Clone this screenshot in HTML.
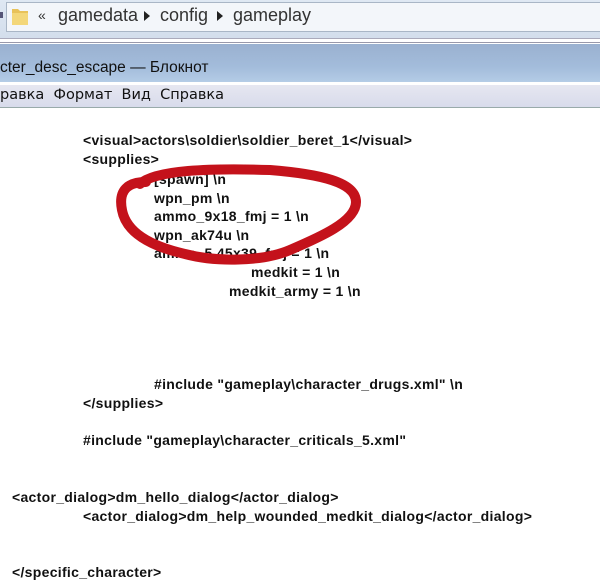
<!DOCTYPE html>
<html><head><meta charset="utf-8"><style>
body{margin:0;width:600px;height:582px;overflow:hidden;background:#fff;position:relative;font-family:"Liberation Sans",sans-serif}
.a{position:absolute}
.t{position:absolute;font-size:14px;letter-spacing:0.3px;font-weight:bold;color:#111;white-space:pre;line-height:16px}
</style></head><body>
<div class="a" style="left:0;top:0;width:600px;height:38px;background:linear-gradient(#dfe8f3,#d3deec)"></div>
<div class="a" style="left:6px;top:2px;width:600px;height:28px;background:#f3f6fa;border:1px solid #a9b6c6"></div>
<div class="a" style="left:0;top:12px;width:5px;height:6px;border-left:3px solid #557"></div>
<svg class="a" style="left:10px;top:5px" width="20" height="22"><path d="M2 4h6l2 2h8v14H2z" fill="#e8c25a"/><path d="M2 8h16v12H2z" fill="#f3d77a"/></svg>
<div class="a" style="left:38px;top:7px;font-size:14px;color:#333">«</div>
<div class="a" style="left:58px;top:5px;font-size:18px;color:#333">gamedata</div>
<div class="a" style="left:144px;top:11px;width:0;height:0;border-left:6px solid #222;border-top:5px solid transparent;border-bottom:5px solid transparent"></div>
<div class="a" style="left:160px;top:5px;font-size:18px;color:#333">config</div>
<div class="a" style="left:217px;top:11px;width:0;height:0;border-left:6px solid #222;border-top:5px solid transparent;border-bottom:5px solid transparent"></div>
<div class="a" style="left:233px;top:5px;font-size:18px;color:#333">gameplay</div>
<div class="a" style="left:0;top:38px;width:600px;height:3px;background:#fff;border-top:1px solid #aab;border-bottom:1px solid #99a"></div>
<div class="a" style="left:0;top:44px;width:600px;height:38px;background:linear-gradient(#9ab1d0,#a3bcdb 60%,#b4cce6)"></div>
<div class="a" style="left:0;top:59px;font-size:15.5px;color:#111">cter_desc_escape — Блокнот</div>
<div class="a" style="left:0;top:82px;width:600px;height:3px;background:#fff"></div>
<div class="a" style="left:0;top:85px;width:600px;height:22px;background:linear-gradient(#e6e7f1,#d8dbeb);border-bottom:1px solid #9aa"></div>
<div class="a" style="left:0;top:87px;font-size:14.5px;color:#111;font-family:'DejaVu Sans',sans-serif">равка&nbsp; Формат&nbsp; Вид&nbsp; Справка</div>

<div class="t" style="left:83px;top:132px">&lt;visual&gt;actors\soldier\soldier_beret_1&lt;/visual&gt;</div>
<div class="t" style="left:83px;top:151px">&lt;supplies&gt;</div>
<div class="t" style="left:154px;top:171px">[spawn] \n</div>
<div class="t" style="left:154px;top:190px">wpn_pm \n</div>
<div class="t" style="left:154px;top:208px">ammo_9x18_fmj = 1 \n</div>
<div class="t" style="left:154px;top:227px">wpn_ak74u \n</div>
<div class="t" style="left:154px;top:245px">ammo_5.45x39_fmj = 1 \n</div>
<div class="t" style="left:251px;top:264px">medkit = 1 \n</div>
<div class="t" style="left:229px;top:283px">medkit_army = 1 \n</div>
<div class="t" style="left:154px;top:376px">#include "gameplay\character_drugs.xml" \n</div>
<div class="t" style="left:83px;top:395px">&lt;/supplies&gt;</div>
<div class="t" style="left:83px;top:432px">#include "gameplay\character_criticals_5.xml"</div>
<div class="t" style="left:12px;top:489px">&lt;actor_dialog&gt;dm_hello_dialog&lt;/actor_dialog&gt;</div>
<div class="t" style="left:83px;top:508px">&lt;actor_dialog&gt;dm_help_wounded_medkit_dialog&lt;/actor_dialog&gt;</div>
<div class="t" style="left:12px;top:564px">&lt;/specific_character&gt;</div>

<svg class="a" style="left:0;top:0" width="600" height="582"><path d="M140 184 C155 170,210 168,270 170 C320 174,356 182,356 202 C356 222,318 238,290 250 C262 262,215 262,185 254 C150 246,126 232,122 210 C118 190,128 182,146 182" fill="none" stroke="#c4121b" stroke-width="10" stroke-linecap="round"/></svg>
</body></html>
